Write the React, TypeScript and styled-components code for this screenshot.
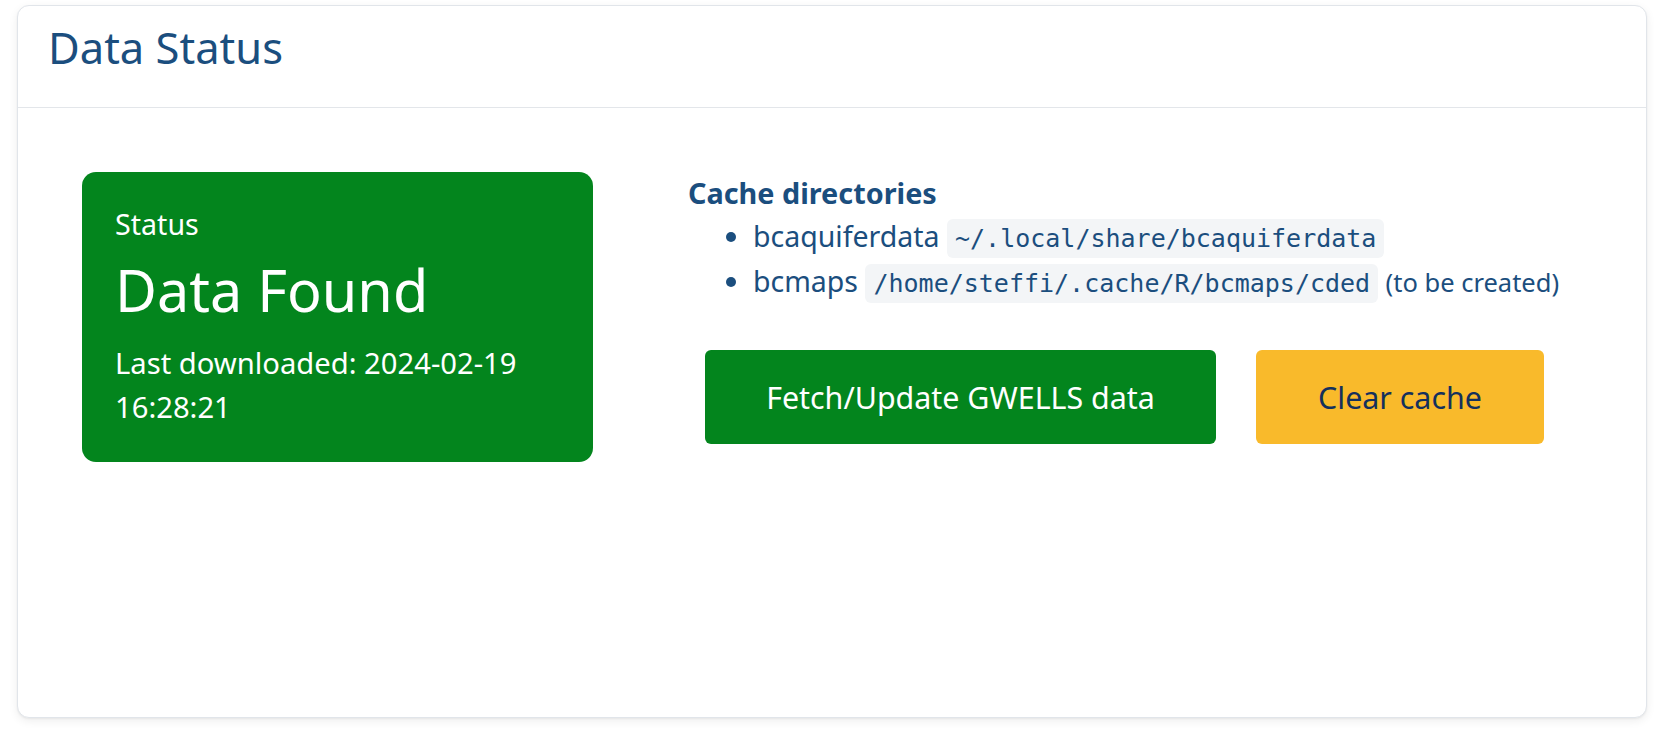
import React from "react"
import styled, { createGlobalStyle } from "styled-components"

const GlobalStyle = createGlobalStyle`
  html, body {
    margin: 0;
    padding: 0;
    background: #ffffff;
    font-family: "Noto Sans", "Open Sans", sans-serif;
  }
`

const blue = "#1b4e7e"

const Page = styled.div`
  padding: 5px 11px 26px 17px;
`

const Card = styled.section`
  box-sizing: border-box;
  height: 713px;
  background: #fff;
  border: 1px solid #e1e5ea;
  border-radius: 12px;
  box-shadow: 0 3px 10px rgba(0, 0, 0, 0.07), 0 1px 2px rgba(0, 0, 0, 0.05);
  display: flex;
  flex-direction: column;
`

const CardHeader = styled.header`
  box-sizing: border-box;
  height: 102px;
  padding: 15px 30px 0;
  border-bottom: 1px solid #e3e6ea;
`

const Title = styled.h2`
  margin: 0;
  font-size: 43.5px;
  line-height: 53px;
  font-weight: 400;
  color: ${blue};
`

const CardBody = styled.div`
  display: flex;
  align-items: flex-start;
  gap: 95px;
  padding: 64px 64px 0;
`

const ValueBox = styled.div`
  box-sizing: border-box;
  flex: 0 0 511px;
  height: 290px;
  padding: 31px 33px;
  background: #03851d;
  border-radius: 14px;
  color: #fff;
`

const BoxLabel = styled.p`
  margin: 0;
  font-size: 28.6px;
  line-height: 42px;
`

const BoxValue = styled.p`
  margin: 12px 0 0;
  font-size: 57.5px;
  line-height: 67px;
`

const BoxNote = styled.p`
  margin: 17px 0 0;
  font-size: 29.2px;
  line-height: 44px;
`

const Side = styled.div`
  flex: 1;
  color: ${blue};
  font-size: 28.8px;
`

const SideTitle = styled.div`
  font-weight: 700;
  line-height: 42px;
`

const DirList = styled.ul`
  margin: 1px 0 0;
  padding-left: 65px;
  font-size: 28.5px;
`

const DirItem = styled.li`
  line-height: 43px;
`

const Code = styled.code`
  font-family: "DejaVu Sans Mono", "Liberation Mono", monospace;
  font-size: 25px;
  padding: 5px 8px;
  background: #f3f5f7;
  border-radius: 6px;
`

const Small = styled.small`
  font-size: 25.5px;
`

const Actions = styled.div`
  display: flex;
  gap: 40px;
  margin: 45px 0 0 17px;
`

const ActionButton = styled.button<{ $variant: "success" | "warning"; $width: number }>`
  box-sizing: border-box;
  width: ${(p) => p.$width}px;
  height: 94px;
  border: none;
  border-radius: 6px;
  font-family: "Noto Sans", "Open Sans", sans-serif;
  font-size: 30.4px;
  cursor: pointer;
  background: ${(p) => (p.$variant === "success" ? "#03851d" : "#f9ba2b")};
  color: ${(p) => (p.$variant === "success" ? "#ffffff" : "#14305c")};
`

const dirs = [
  { name: "bcaquiferdata", path: "~/.local/share/bcaquiferdata", note: "" },
  { name: "bcmaps", path: "/home/steffi/.cache/R/bcmaps/cded", note: "(to be created)" },
]

export default function App() {
  return (
    <>
      <GlobalStyle />
      <Page>
        <Card>
          <CardHeader>
            <Title>Data Status</Title>
          </CardHeader>
          <CardBody>
            <ValueBox>
              <BoxLabel>Status</BoxLabel>
              <BoxValue>Data Found</BoxValue>
              <BoxNote>Last downloaded: 2024-02-19 16:28:21</BoxNote>
            </ValueBox>
            <Side>
              <SideTitle>Cache directories</SideTitle>
              <DirList>
                {dirs.map((d) => (
                  <DirItem key={d.name}>
                    {d.name} <Code>{d.path}</Code>
                    {d.note ? <> <Small>{d.note}</Small></> : null}
                  </DirItem>
                ))}
              </DirList>
              <Actions>
                <ActionButton $variant="success" $width={511}>
                  Fetch/Update GWELLS data
                </ActionButton>
                <ActionButton $variant="warning" $width={288}>
                  Clear cache
                </ActionButton>
              </Actions>
            </Side>
          </CardBody>
        </Card>
      </Page>
    </>
  )
}
